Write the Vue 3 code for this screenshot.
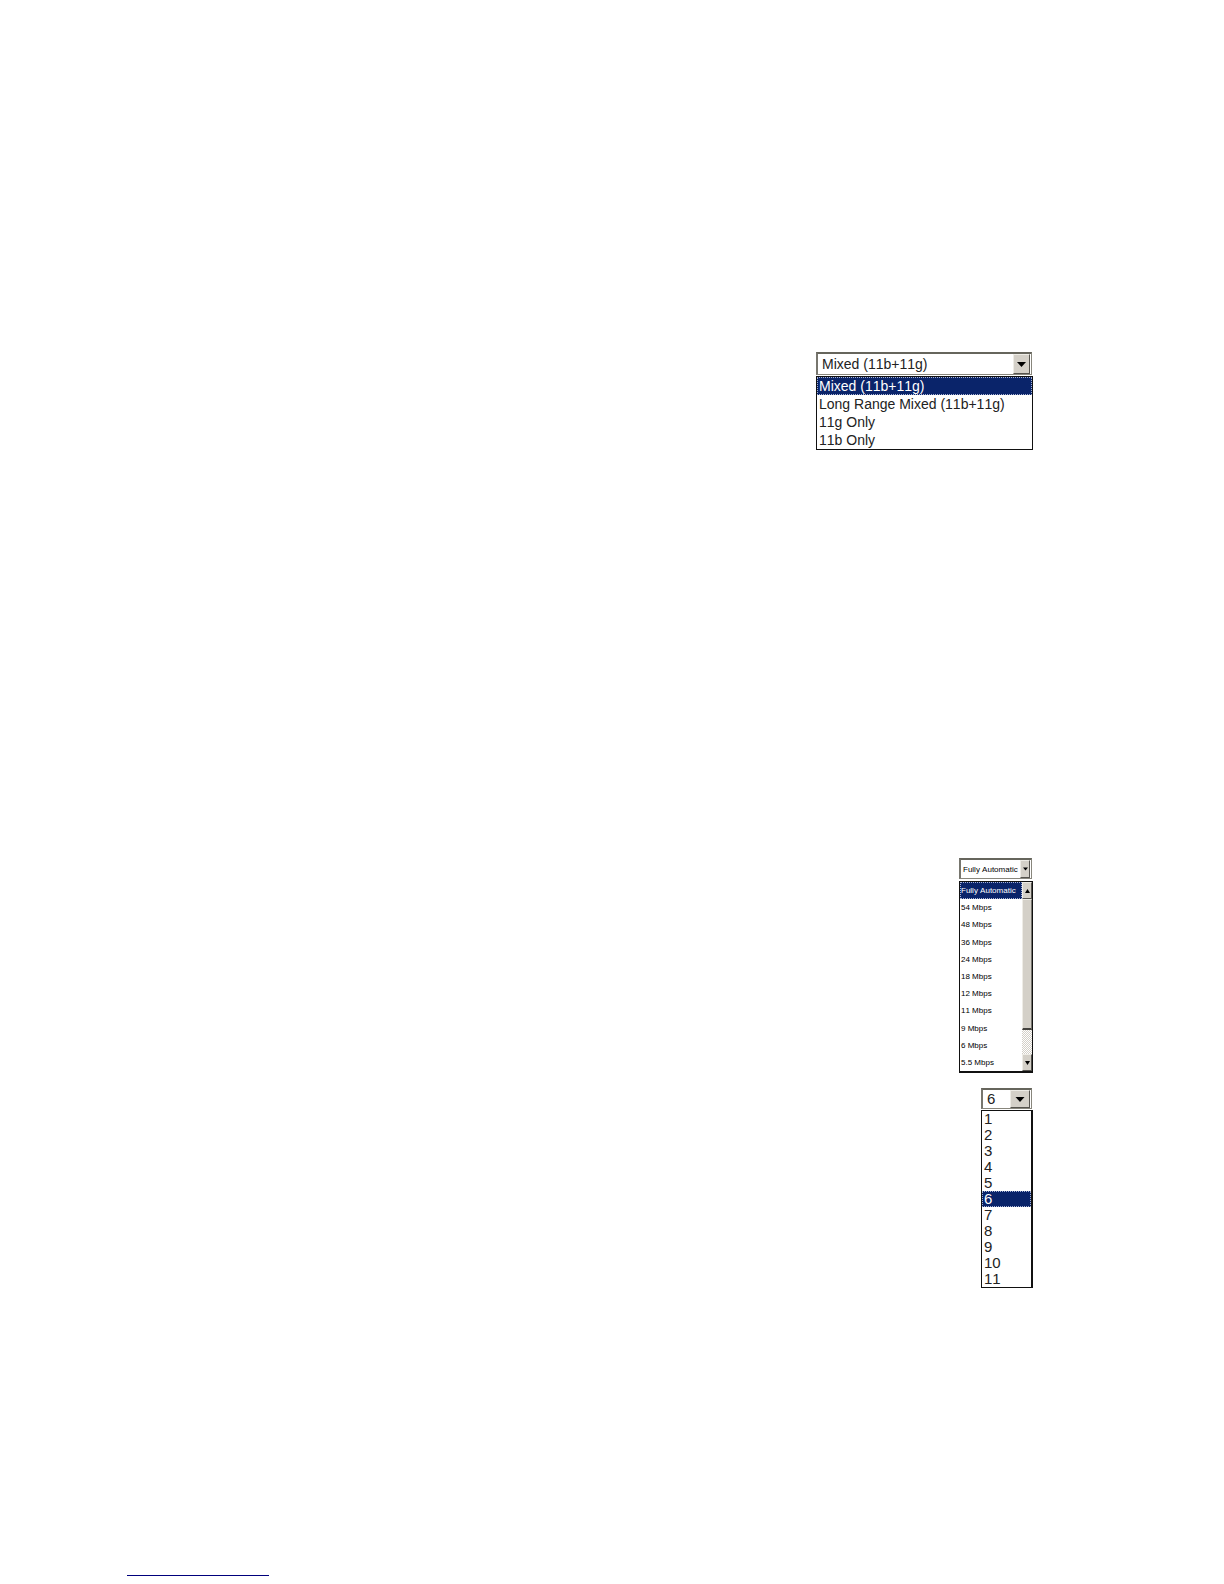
<script setup>
import { ref } from 'vue'

const menus = ref([
  {
    id: 'mode',
    label: 'Wireless mode',
    value: 'Mixed (11b+11g)',
    options: ['Mixed (11b+11g)', 'Long Range Mixed (11b+11g)', '11g Only', '11b Only'],
    scroll: false
  },
  {
    id: 'rate',
    label: 'Transmission rate',
    value: 'Fully Automatic',
    options: ['Fully Automatic', '54 Mbps', '48 Mbps', '36 Mbps', '24 Mbps', '18 Mbps', '12 Mbps', '11 Mbps', '9 Mbps', '6 Mbps', '5.5 Mbps'],
    scroll: true
  },
  {
    id: 'channel',
    label: 'Channel',
    value: '6',
    options: ['1', '2', '3', '4', '5', '6', '7', '8', '9', '10', '11'],
    scroll: false
  }
])
</script>

<template>
  <main class="page">
    <section v-for="menu in menus" :key="menu.id" class="menu" :class="menu.id">
      <div class="field">
        <select :id="menu.id" v-model="menu.value" :aria-label="menu.label">
          <option v-for="o in menu.options" :key="o" :value="o">{{ o }}</option>
        </select>
        <span class="drop" aria-hidden="true">
          <svg class="arrow" viewBox="0 0 9 5"><path d="M0 0h9L4.5 5z" /></svg>
        </span>
      </div>
      <div class="popup">
        <ul role="listbox" :aria-label="menu.label">
          <li
            v-for="o in menu.options"
            :key="o"
            role="option"
            :aria-selected="o === menu.value"
            :class="{ selected: o === menu.value }"
            @click="menu.value = o"
          >{{ o }}</li>
        </ul>
        <div v-if="menu.scroll" class="scrollbar">
          <button type="button" aria-label="Scroll up">
            <svg class="arrow" viewBox="0 0 5 4"><path d="M0 4h5L2.5 0z" /></svg>
          </button>
          <div class="thumb"></div>
          <div class="track"></div>
          <button type="button" aria-label="Scroll down">
            <svg class="arrow" viewBox="0 0 5 4"><path d="M0 0h5L2.5 4z" /></svg>
          </button>
        </div>
      </div>
    </section>
    <hr class="rule" />
  </main>
</template>

<style>
body {
  margin: 0;
  background: #fff;
}
</style>

<style scoped>
.page {
  box-sizing: border-box;
  min-height: 100vh;
  padding: 352px 191px 8px 127px;
  display: flex;
  flex-direction: column;
  align-items: flex-end;
  font-family: "Liberation Sans", Arial, sans-serif;
  font-size: 14px;
  font-kerning: none;
  color: #222;
}
.menu {
  display: flex;
  flex-direction: column;
  gap: 1px;
}
.mode {
  width: 217px;
  margin-bottom: 408px;
}
.rate {
  width: 74px;
  margin-bottom: 15px;
  font-size: 8px;
  color: #000;
}
.channel {
  width: 52px;
  font-size: 15px;
}
.field {
  position: relative;
  height: 21px;
  margin-right: 1px;
}
.mode .field {
  height: 23px;
}
select {
  appearance: none;
  box-sizing: border-box;
  display: block;
  width: 100%;
  height: 100%;
  margin: 0;
  padding: 0 0 0 4px;
  border: 1px solid #88867c;
  border-top: 2px solid #66655c;
  border-left: 2px solid #77766e;
  border-radius: 0;
  background: #fff;
  color: inherit;
  font: inherit;
  font-kerning: none;
}
.rate select {
  padding-left: 2px;
}
.channel select {
  padding-bottom: 1px;
}
.drop,
.scrollbar button {
  box-sizing: border-box;
  display: flex;
  align-items: center;
  justify-content: center;
  padding: 0;
  background: #d4d0c8;
  border: 1px solid;
  border-color: #eeece6 #55534e #55534e #eeece6;
}
.drop {
  position: absolute;
  top: 2px;
  right: 2px;
  bottom: 1px;
  width: 17px;
  pointer-events: none;
}
.rate .drop {
  width: 10px;
}
.channel .drop {
  width: 20px;
}
.arrow {
  display: block;
  flex: none;
  width: 9px;
  height: 5px;
  fill: #000;
}
.rate .arrow {
  width: 5px;
  height: 4px;
}
.channel .arrow {
  width: 10px;
}
.popup {
  display: flex;
  border: 1px solid #111;
}
.rate .popup {
  height: 189px;
  border-bottom-width: 2px;
  margin-top: 1px;
}
.channel .popup {
  border-width: 1px 2px 1px 1px;
}
ul {
  flex: 1;
  min-width: 0;
  display: flex;
  flex-direction: column;
  margin: 0;
  padding: 0;
  list-style: none;
}
li {
  box-sizing: border-box;
  flex: 1;
  padding-left: 2px;
  line-height: 18px;
  white-space: nowrap;
  cursor: default;
}
.rate li {
  padding-left: 1px;
  min-height: 0;
}
.channel li {
  line-height: 16px;
}
.selected {
  background: #0a246a;
  color: #fff;
  outline: 1px dotted #a9b4d4;
  outline-offset: -1px;
}
.scrollbar {
  flex: none;
  width: 10px;
  display: flex;
  flex-direction: column;
}
.scrollbar button {
  width: 100%;
  height: 17px;
}
.thumb {
  flex: 1;
  background: #d4d0c8;
  border: 1px solid;
  border-color: #eeece6 #77756e #44423e #eeece6;
  border-bottom-width: 2px;
}
.track {
  height: 24px;
  background: repeating-conic-gradient(#d4d0c8 0 25%, #fff 0 50%) 0 0 / 2px 2px;
}
.rule {
  align-self: flex-start;
  width: 142px;
  height: 1px;
  margin: auto 0 0;
  border: 0;
  background: #00007c;
}
</style>
